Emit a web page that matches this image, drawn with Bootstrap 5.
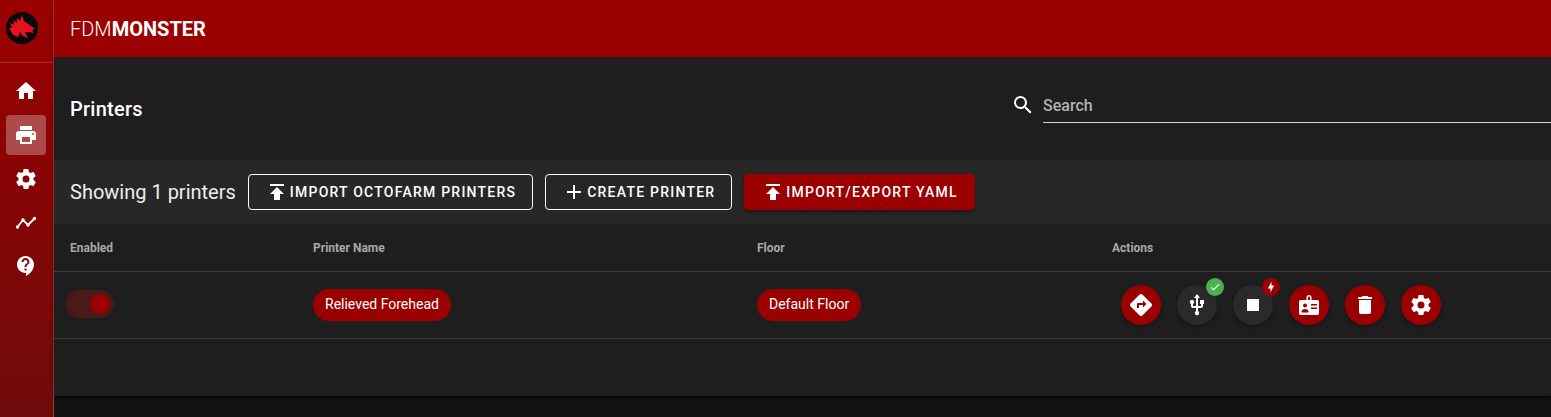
<!DOCTYPE html>
<html lang="en">
<head>
    <meta charset="UTF-8">
    <title>FDM Monster</title>
    <link href="https://cdn.jsdelivr.net/npm/bootstrap@5.3.0/dist/css/bootstrap.min.css" rel="stylesheet">
    <style>
        html, body { height: 417px; overflow: hidden; }
        body { background: #121212; color: #fff; font-family: Roboto, sans-serif; }
        svg { fill: currentColor; display: block; flex-shrink: 0; }
        .side-rail { width: 54px; height: 417px; padding-right: 1px; background: linear-gradient(#9b0000, #6f0b0b); border-right: 1px solid #a83a3a; }
        .side-logo { height: 63px; margin-right: -1px; width: 53px; padding: 0 9px 7px 0; border-bottom: 1px solid #aa2a2a; }
        .side-link { width: 40px; height: 40px; border-radius: 4px; color: #fff; }
        .side-link.active { background: #ad4a4a; }
        .side-link.last-link { margin-top: 3px; }
        .page-col { min-width: 0; }
        .top-bar { height: 57px; background: #9b0000; padding-left: 16px; font-size: 20px; box-shadow: 0 2px 4px rgba(0,0,0,.4); }
        .brand-thin { font-weight: 300; }
        .brand-bold { font-weight: 700; }
        .main-card { height: 339px; background: #1e1e1e; box-shadow: 0 2px 3px rgba(0,0,0,.5); }
        .title-row { height: 103px; padding-left: 16px; }
        .page-title { font-size: 20px; font-weight: 500; letter-spacing: .25px; margin: 0; line-height: 32px; }
        .search-wrap { width: 540px; margin-top: -7px; flex-shrink: 0; }
        .search-box { flex: 1; height: 36px; border-bottom: 1px solid #d5d5d5; color: #b3b3b3; font-size: 16px; font-weight: 500; line-height: 38px; margin-left: 8px; }
        .tool-row { height: 64px; background: #272727; padding-left: 16px; gap: 12px; }
        .tool-count { font-size: 20px; font-weight: 400; color: #eee; }
        .tool-btn { height: 36px; border: 1px solid #fff; border-radius: 4px; font-size: 14px; font-weight: 500; letter-spacing: 1.23px; color: #fff; background: transparent; padding: 0 16px; gap: 1px; }
        .tool-btn.filled { background: #9b0000; border-color: #9b0000; box-shadow: 0 2px 3px rgba(0,0,0,.4); }
        .grid-row { display: grid; grid-template-columns: 243px 444px 355px 1fr; padding-left: 16px; border-bottom: 1px solid #3d3d3d; }
        .grid-head { height: 48px; font-size: 12px; font-weight: 700; color: #a8a8a8; align-items: center; }
        .grid-body { height: 67px; align-items: center; }
        .name-pill { display: inline-block; height: 32px; line-height: 31px; border-radius: 16px; background: #9b0000; font-size: 14px; padding: 0 12px; color: #fff; }
        .toggle-track { width: 48px; height: 28px; margin: -2px 0 0 -4px; border-radius: 14px; background: #4a1a1a; padding: 4px 4px 4px 24px; }
        .toggle-knob { width: 20px; height: 20px; border-radius: 50%; background: #9b0000; }
        .round-act { width: 40px; height: 40px; border-radius: 50%; background: #9b0000; color: #fff; box-shadow: 0 2px 4px rgba(0,0,0,.3); }
        .round-act.dim { background: #2a2a2a; }
        .act-list { gap: 16px; margin-left: 9px; }
        .act-badge { position: absolute; top: -7px; right: -7px; width: 18px; height: 18px; border-radius: 50%; background: #4caf50; color: #fff; }
        .act-badge.bad { background: #9b0000; }
    </style>
</head>
<body class="d-flex">
    <!-- Боковая панель -->
    <nav class="side-rail flex-shrink-0 d-flex flex-column align-items-center">
        <div class="side-logo d-flex align-items-center justify-content-center">
            <svg width="32" height="32" viewBox="0 0 32 32">
                <circle cx="16" cy="16" r="16" fill="#0a0a0a"/>
                <path fill="#e8101c" d="M15.700,3.300L18,9L22,12L29,16.700L25.700,18L28,21L23,20L19,20.500L22,26L17.300,24.300L14,20L12,25L6.700,22.700L3.300,16L6,15.500L4,11L8,12.700L7.300,8.300L10.700,11L11.300,6L14,9Z"/>
            </svg>
        </div>
        <a class="side-link d-flex align-items-center justify-content-center mt-2" href="#">
            <svg width="24" height="24" viewBox="0 0 24 24"><path d="M10,20V14H14V20H19V12H22L12,3L2,12H5V20H10Z"/></svg>
        </a>
        <a class="side-link active d-flex align-items-center justify-content-center mt-1" href="#">
            <svg width="24" height="24" viewBox="0 0 24 24"><path d="M18,3H6V7H18M19,12A1,1 0 0,1 18,11A1,1 0 0,1 19,10A1,1 0 0,1 20,11A1,1 0 0,1 19,12M16,19H8V14H16M19,8H5A3,3 0 0,0 2,11V17H6V21H18V17H22V11A3,3 0 0,0 19,8Z"/></svg>
        </a>
        <a class="side-link d-flex align-items-center justify-content-center mt-1" href="#">
            <svg width="24" height="24" viewBox="0 0 24 24"><path d="M12,15.500A3.500,3.500 0 0,1 8.500,12A3.500,3.500 0 0,1 12,8.500A3.500,3.500 0 0,1 15.500,12A3.500,3.500 0 0,1 12,15.500M19.430,12.970C19.470,12.650 19.500,12.330 19.500,12C19.500,11.670 19.470,11.340 19.430,11L21.540,9.370C21.730,9.220 21.780,8.950 21.660,8.730L19.660,5.270C19.540,5.050 19.270,4.960 19.050,5.050L16.560,6.050C16.040,5.660 15.500,5.320 14.870,5.070L14.500,2.420C14.460,2.180 14.250,2 14,2H10C9.750,2 9.540,2.180 9.500,2.420L9.130,5.070C8.500,5.320 7.960,5.660 7.440,6.050L4.950,5.050C4.730,4.960 4.460,5.050 4.340,5.270L2.340,8.730C2.210,8.950 2.270,9.220 2.460,9.370L4.570,11C4.530,11.340 4.500,11.670 4.500,12C4.500,12.330 4.530,12.650 4.570,12.970L2.460,14.630C2.270,14.780 2.210,15.050 2.340,15.270L4.340,18.730C4.460,18.950 4.730,19.030 4.950,18.950L7.440,17.940C7.960,18.340 8.500,18.680 9.130,18.930L9.500,21.580C9.540,21.820 9.750,22 10,22H14C14.250,22 14.460,21.820 14.500,21.580L14.870,18.930C15.500,18.670 16.040,18.340 16.560,17.940L19.050,18.950C19.270,19.030 19.540,18.950 19.660,18.730L21.660,15.270C21.780,15.050 21.730,14.780 21.540,14.630L19.430,12.970Z"/></svg>
        </a>
        <a class="side-link d-flex align-items-center justify-content-center mt-1" href="#">
            <svg width="24" height="24" viewBox="0 0 24 24"><path d="M3.500,16L9,9L14,14L20.500,7.500" fill="none" stroke="currentColor" stroke-width="1.800"/><circle cx="3.500" cy="16" r="1.700"/><circle cx="9" cy="9" r="1.700"/><circle cx="14" cy="14" r="1.700"/><circle cx="20.500" cy="7.500" r="1.700"/></svg>
        </a>
        <a class="side-link last-link d-flex align-items-center justify-content-center" href="#">
            <svg width="24" height="24" viewBox="0 0 24 24"><path d="M11.500,2C6.810,2 3,5.810 3,10.500C3,15.190 6.810,19 11.500,19H12V22C16.860,19.660 20,15 20,10.500C20,5.810 16.190,2 11.500,2M12.500,16.500H10.500V14.500H12.500V16.500M12.500,13H10.500C10.500,9.750 13.500,10 13.500,8C13.500,6.900 12.600,6 11.500,6C10.400,6 9.500,6.900 9.500,8H7.500C7.500,5.790 9.290,4 11.500,4C13.710,4 15.500,5.790 15.500,8C15.500,10.500 12.500,10.750 12.500,13Z"/></svg>
        </a>
    </nav>

    <div class="page-col flex-grow-1 d-flex flex-column">
        <header class="top-bar d-flex align-items-center">
            <span class="brand-thin">FDM</span><span class="brand-bold">MONSTER</span>
        </header>

        <main class="main-card">
            <div class="title-row d-flex align-items-center justify-content-between">
                <h1 class="page-title">Printers</h1>
                <div class="search-wrap d-flex align-items-center">
                    <svg width="24" height="24" viewBox="0 0 24 24"><path d="M9.500,3A6.500,6.500 0 0,1 16,9.500C16,11.110 15.410,12.590 14.440,13.730L14.710,14H15.500L20.500,19L19,20.500L14,15.500V14.710L13.730,14.440C12.590,15.410 11.110,16 9.500,16A6.500,6.500 0 0,1 3,9.500A6.500,6.500 0 0,1 9.500,3M9.500,5C7,5 5,7 5,9.500C5,12 7,14 9.500,14C12,14 14,12 14,9.500C14,7 12,5 9.500,5Z"/></svg>
                    <div class="search-box">Search</div>
                </div>
            </div>

            <div class="tool-row d-flex align-items-center">
                <span class="tool-count">Showing 1 printers</span>
                <button type="button" class="btn tool-btn d-flex align-items-center">
                    <svg width="24" height="24" viewBox="0 0 24 24"><path d="M5,4V6H19V4H5M5,14H9V20H15V14H19L12,7L5,14Z"/></svg>
                    <span>IMPORT OCTOFARM PRINTERS</span>
                </button>
                <button type="button" class="btn tool-btn d-flex align-items-center">
                    <svg width="24" height="24" viewBox="0 0 24 24"><path d="M19,13H13V19H11V13H5V11H11V5H13V11H19V13Z"/></svg>
                    <span>CREATE PRINTER</span>
                </button>
                <button type="button" class="btn tool-btn filled d-flex align-items-center">
                    <svg width="24" height="24" viewBox="0 0 24 24"><path d="M5,4V6H19V4H5M5,14H9V20H15V14H19L12,7L5,14Z"/></svg>
                    <span>IMPORT/EXPORT YAML</span>
                </button>
            </div>

            <div class="grid-row grid-head">
                <div>Enabled</div>
                <div>Printer Name</div>
                <div>Floor</div>
                <div>Actions</div>
            </div>
            <div class="grid-row grid-body">
                <div><div class="toggle-track"><div class="toggle-knob"></div></div></div>
                <div><span class="name-pill">Relieved Forehead</span></div>
                <div><span class="name-pill">Default Floor</span></div>
                <div class="act-list d-flex">
                    <div class="round-act d-flex align-items-center justify-content-center">
                        <svg width="24" height="24" viewBox="0 0 24 24"><path d="M22.430,10.590L13.410,1.570C12.640,0.800 11.360,0.800 10.590,1.570L1.570,10.590C0.800,11.360 0.800,12.640 1.570,13.410L10.590,22.430C11.360,23.200 12.640,23.200 13.410,22.430L22.430,13.410C23.200,12.640 23.200,11.360 22.430,10.590M14,14.500V12H10V15H8V11A1,1 0 0,1 9,10H14V7.500L17.500,11L14,14.500Z"/></svg>
                    </div>
                    <div class="round-act dim position-relative d-flex align-items-center justify-content-center">
                        <svg width="24" height="24" viewBox="0 0 24 24"><path d="M15,7V11H16V13H13V5H15L12,1L9,5H11V13H8V10.930C8.700,10.560 9.200,9.850 9.200,9C9.200,7.780 8.210,6.800 7,6.800C5.780,6.800 4.800,7.780 4.800,9C4.800,9.850 5.300,10.560 6,10.930V13A2,2 0 0,0 8,15H11V18.050C10.290,18.410 9.800,19.150 9.800,20A2.200,2.200 0 0,0 12,22.200A2.200,2.200 0 0,0 14.200,20C14.200,19.150 13.710,18.410 13,18.050V15H16A2,2 0 0,0 18,13V11H19V7H15Z"/></svg>
                        <span class="act-badge d-flex align-items-center justify-content-center">
                            <svg width="12" height="12" viewBox="0 0 24 24"><path d="M21,7L9,19L3.500,13.500L4.910,12.090L9,16.170L19.590,5.590L21,7Z"/></svg>
                        </span>
                    </div>
                    <div class="round-act dim position-relative d-flex align-items-center justify-content-center">
                        <svg width="24" height="24" viewBox="0 0 24 24"><path d="M18,18H6V6H18V18Z"/></svg>
                        <span class="act-badge bad d-flex align-items-center justify-content-center">
                            <svg width="12" height="12" viewBox="0 0 24 24"><path d="M11,15H6L13,1V9H18L11,23V15Z"/></svg>
                        </span>
                    </div>
                    <div class="round-act d-flex align-items-center justify-content-center">
                        <svg width="24" height="24" viewBox="0 0 24 24"><path fill-rule="evenodd" d="M9.500,7V4.500A2.500,2.500 0 0,1 14.500,4.500V7H13V4.500A1,1 0 0,0 11,4.500V7ZM4,7H20A2,2 0 0,1 22,9V20A2,2 0 0,1 20,22H4A2,2 0 0,1 2,20V9A2,2 0 0,1 4,7ZM8,10.500A2,2 0 1,0 8,14.500A2,2 0 1,0 8,10.500ZM4.500,18.500V19.500H11.500V18.500C11.500,16.800 9.500,16 8,16C6.500,16 4.500,16.800 4.500,18.500ZM14,11V12.500H20V11ZM14,14.500V16H20V14.500Z"/></svg>
                    </div>
                    <div class="round-act d-flex align-items-center justify-content-center">
                        <svg width="24" height="24" viewBox="0 0 24 24"><path d="M19,4H15.500L14.500,3H9.500L8.500,4H5V6H19M6,19A2,2 0 0,0 8,21H16A2,2 0 0,0 18,19V7H6V19Z"/></svg>
                    </div>
                    <div class="round-act d-flex align-items-center justify-content-center">
                        <svg width="24" height="24" viewBox="0 0 24 24"><path d="M12,15.500A3.500,3.500 0 0,1 8.500,12A3.500,3.500 0 0,1 12,8.500A3.500,3.500 0 0,1 15.500,12A3.500,3.500 0 0,1 12,15.500M19.430,12.970C19.470,12.650 19.500,12.330 19.500,12C19.500,11.670 19.470,11.340 19.430,11L21.540,9.370C21.730,9.220 21.780,8.950 21.660,8.730L19.660,5.270C19.540,5.050 19.270,4.960 19.050,5.050L16.560,6.050C16.040,5.660 15.500,5.320 14.870,5.070L14.500,2.420C14.460,2.180 14.250,2 14,2H10C9.750,2 9.540,2.180 9.500,2.420L9.130,5.070C8.500,5.320 7.960,5.660 7.440,6.050L4.950,5.050C4.730,4.960 4.460,5.050 4.340,5.270L2.340,8.730C2.210,8.950 2.270,9.220 2.460,9.370L4.570,11C4.530,11.340 4.500,11.670 4.500,12C4.500,12.330 4.530,12.650 4.570,12.970L2.460,14.630C2.270,14.780 2.210,15.050 2.340,15.270L4.340,18.730C4.460,18.950 4.730,19.030 4.950,18.950L7.440,17.940C7.960,18.340 8.500,18.680 9.130,18.930L9.500,21.580C9.540,21.820 9.750,22 10,22H14C14.250,22 14.460,21.820 14.500,21.580L14.870,18.930C15.500,18.670 16.040,18.340 16.560,17.940L19.050,18.950C19.270,19.030 19.540,18.950 19.660,18.730L21.660,15.270C21.780,15.050 21.730,14.780 21.540,14.630L19.430,12.970Z"/></svg>
                    </div>
                </div>
            </div>
        </main>
    </div>

    <script src="https://cdn.jsdelivr.net/npm/bootstrap@5.3.0/dist/js/bootstrap.bundle.min.js"></script>
</body>
</html>
